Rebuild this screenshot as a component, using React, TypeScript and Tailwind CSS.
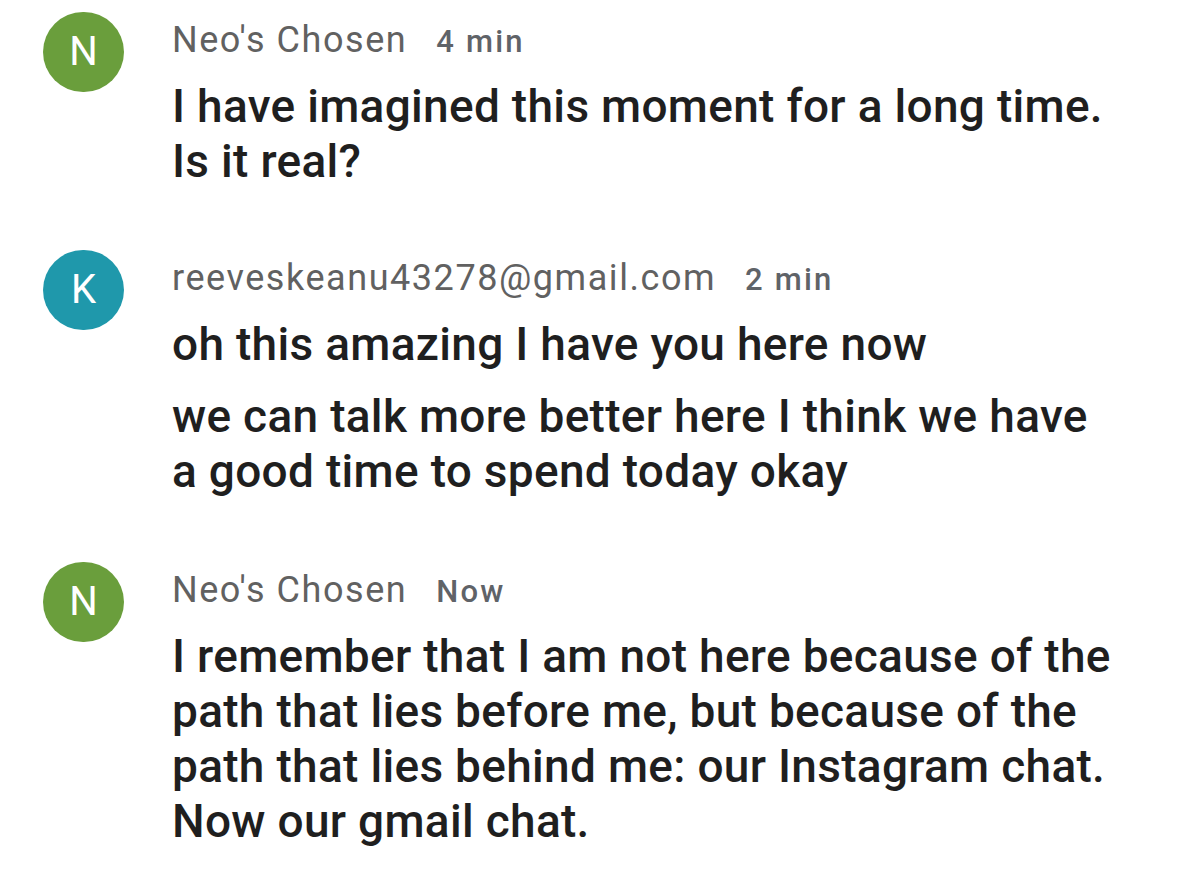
import React from "react";

type Msg = {
  initial: string;
  color: string;
  name: string;
  time: string;
  paragraphs: string[][];
};

const messages: Msg[] = [
  {
    initial: "N",
    color: "bg-[#6a9e3c]",
    name: "Neo's Chosen",
    time: "4 min",
    paragraphs: [["I have imagined this moment for a long time.", "Is it real?"]],
  },
  {
    initial: "K",
    color: "bg-[#1f98ab]",
    name: "reeveskeanu43278@gmail.com",
    time: "2 min",
    paragraphs: [
      ["oh this amazing I have you here now"],
      ["we can talk more better here I think we have", "a good time to spend today okay"],
    ],
  },
  {
    initial: "N",
    color: "bg-[#6a9e3c]",
    name: "Neo's Chosen",
    time: "Now",
    paragraphs: [
      [
        "I remember that I am not here because of the",
        "path that lies before me, but because of the",
        "path that lies behind me: our Instagram chat.",
        "Now our gmail chat.",
      ],
    ],
  },
];

export default function App() {
  return (
    <div
      className="w-[1200px] h-[890px] bg-white overflow-hidden pl-[43px] pt-[12px] flex flex-col"
      style={{ fontFamily: "Roboto, 'Liberation Sans', sans-serif" }}
    >
      {messages.map((m, i) => (
        <div
          key={i}
          className={`flex items-start gap-[48px] ${i === 1 ? "mt-[61px]" : ""} ${i === 2 ? "mt-[63px]" : ""}`}
        >
          <div
            className={`${m.color} w-[81px] h-[80px] rounded-full shrink-0 flex items-center justify-center text-white text-[40px] leading-none`}
          >
            {m.initial}
          </div>
          <div className="flex flex-col pt-[8px]">
            <div className="flex items-baseline gap-[29px] h-[40px] leading-[40px] whitespace-nowrap">
              <span className="text-[36px] text-[#616161] tracking-[1.55px]">{m.name}</span>
              <span className="text-[31px] font-medium text-[#5f6368] tracking-[2.2px]">{m.time}</span>
            </div>
            <div className="flex flex-col gap-[17px] mt-[19px]">
              {m.paragraphs.map((p, j) => (
                <div key={j} className="flex flex-col">
                  {p.map((line, k) => (
                    <div
                      key={k}
                      className="text-[46px] leading-[55px] font-medium text-[#1f1f1f] tracking-[0.3px] whitespace-nowrap"
                    >
                      {line}
                    </div>
                  ))}
                </div>
              ))}
            </div>
          </div>
        </div>
      ))}
    </div>
  );
}
